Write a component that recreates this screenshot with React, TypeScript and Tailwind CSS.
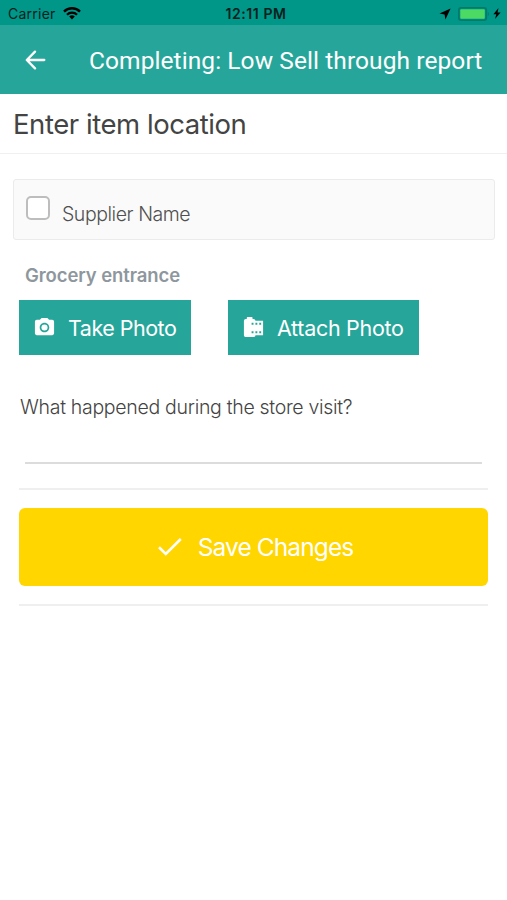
import React from "react";
import { MdCameraAlt, MdCameraRoll } from "react-icons/md";

interface PhotoButtonProps {
  icon: React.ReactNode;
  label: string;
  className?: string;
}

const PhotoButton = ({ icon, label, className = "" }: PhotoButtonProps) => {
  return (
    <button
      className={`flex h-[55px] items-center bg-[#26a69a] pl-[14px] text-white ${className}`}
    >
      {icon}
      <span className="ml-[12px] whitespace-nowrap leading-7">{label}</span>
    </button>
  );
};

const StatusBar = () => {
  return (
    <div className="grid h-[25px] grid-cols-3 items-center bg-[#009688] pt-[3px] text-[#06211e]">
      <div className="flex items-center pl-2">
        <span className="text-[14px] leading-5 tracking-[0.25px]">Carrier</span>
        <svg
          className="mb-px ml-[7px] h-[13px] w-[18px]"
          viewBox="0 0 18 13"
          fill="none"
        >
          <path d="M1 4.6a11.3 11.3 0 0 1 16 0" stroke="#000" strokeWidth="2.4" />
          <path d="M4 7.7a7 7 0 0 1 10 0" stroke="#000" strokeWidth="2.3" />
          <path d="M9 12.4 6.2 9.6a4 4 0 0 1 5.6 0z" fill="#000" />
        </svg>
      </div>
      <span className="pl-[5px] text-center text-[14px] leading-5 font-semibold tracking-[0.6px]">
        12:11 PM
      </span>
      <div className="mb-px flex items-center justify-end pr-[6px]">
        <svg className="h-[12px] w-[12px]" viewBox="0 0 12 12">
          <path d="M11.6.6.5 5.6l5.1.8.8 5.2z" fill="#000" />
        </svg>
        <svg className="ml-[7px] h-[14px] w-[32px]" viewBox="0 0 32 14" fill="none">
          <rect
            x="0.8"
            y="0.8"
            width="27.5"
            height="12.4"
            rx="2.4"
            stroke="#00796b"
            strokeWidth="1.6"
          />
          <rect x="2.3" y="2.2" width="24.5" height="9.6" rx="1" fill="#4cd964" />
          <path d="M29.8 5v4c1.5-.6 1.5-3.4 0-4z" fill="#00796b" />
        </svg>
        <svg className="ml-[3px] h-[11px] w-[8px]" viewBox="0 0 8 11">
          <path d="M5.5 0 .4 6.2h2.9L2 11l5.6-6.4H4.5z" fill="#000" />
        </svg>
      </div>
    </div>
  );
};

const App = () => {
  return (
    <div className="h-[900px] w-[507px] overflow-hidden bg-white font-['Inter',sans-serif]">
      <StatusBar />

      <header className="flex h-[69px] items-center bg-[#26a69a] text-white">
        <svg
          className="ml-[25px] h-[20px] w-[21px]"
          viewBox="0 0 21 20"
          fill="none"
          stroke="currentColor"
          strokeWidth="2.3"
          strokeLinecap="round"
          strokeLinejoin="round"
        >
          <path d="M19.3 10H2M10 1.6 1.8 10l8.2 8.4" />
        </svg>
        <h1 className="mt-[2px] ml-[43px] whitespace-nowrap font-['Roboto',sans-serif] text-[24.5px] leading-8 tracking-[0.08px]">
          Completing: Low Sell through report
        </h1>
      </header>

      <div className="flex h-[60px] items-center border-b border-[#f0f0f0] pl-[13px]">
        <h2 className="whitespace-nowrap text-[27.5px] leading-9 tracking-[-0.45px] text-[#444]">
          Enter item location
        </h2>
      </div>

      <main className="pt-[25px]">
        <label className="mr-[12px] ml-[13px] flex h-[61px] rounded-[3px] border border-[#ebebeb] bg-[#fafafa] pl-[12px] text-[#505050]">
          <span className="mt-[16px] h-[24px] w-[24px] rounded-[5px] border-2 border-[#bdbdbd] bg-white" />
          <span className="mt-[22px] ml-[12px] text-[19.5px] leading-6 font-light tracking-[-0.45px]">
            Supplier Name
          </span>
        </label>

        <h3 className="mt-[23px] ml-[25px] text-[18.5px] leading-6 font-semibold tracking-[-0.1px] text-[#8e979d]">
          Grocery entrance
        </h3>

        <div className="mt-[13px] ml-[19px] flex gap-[37px]">
          <PhotoButton
            className="w-[172px] text-[21.5px] tracking-[-0.5px]"
            icon={<MdCameraAlt className="h-[23px] w-[23px]" />}
            label="Take Photo"
          />
          <PhotoButton
            className="w-[191px] text-[21.5px] tracking-[-0.3px]"
            icon={<MdCameraRoll className="h-[23px] w-[23px]" />}
            label="Attach Photo"
          />
        </div>

        <p className="mt-[40px] ml-[20px] text-[19.5px] leading-6 font-light tracking-[-0.3px] text-[#444]">
          What happened during the store visit?
        </p>
        <div className="mt-[43px] mr-[25px] ml-[25px] h-[2px] bg-[#dcdcdc]" />

        <div className="mx-[19px] mt-[24px] border-y-2 border-[#eeefef] py-[18px]">
          <button className="flex h-[78px] w-full items-center justify-center rounded-[6px] bg-[#ffd600] pl-[4px] text-white">
            <svg
              className="h-[18px] w-[24px]"
              viewBox="0 0 24 18"
              fill="none"
              stroke="currentColor"
              strokeWidth="2.6"
            >
              <path d="M1 9.3 7.8 16 22.8 1" />
            </svg>
            <span className="ml-[16px] text-[24.5px] leading-8 tracking-[-0.9px]">
              Save Changes
            </span>
          </button>
        </div>
      </main>
    </div>
  );
};

export default App;
